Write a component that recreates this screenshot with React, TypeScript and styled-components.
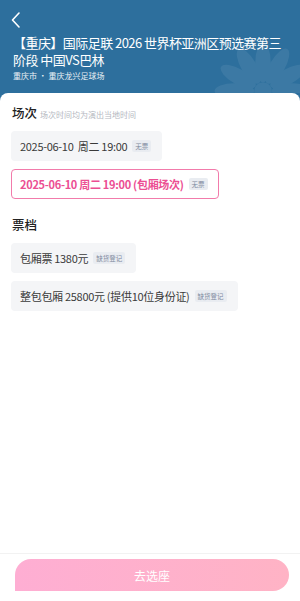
import React, { useState } from 'react';
import styled, { createGlobalStyle } from 'styled-components';

const GlobalStyle = createGlobalStyle`
  html, body {
    margin: 0;
    padding: 0;
    background: #ffffff;
    font-family: "Noto Sans CJK SC", "Noto Sans", sans-serif;
  }
  * { box-sizing: border-box; }
`;

interface Option {
    label: string;
    tag: string;
}

const sessions: Option[] = [
    { label: '2025-06-10  周二 19:00', tag: '无票' },
    { label: '2025-06-10 周二 19:00 (包厢场次)', tag: '无票' },
];

const tickets: Option[] = [
    { label: '包厢票 1380元', tag: '缺货登记' },
    { label: '整包包厢 25800元 (提供10位身份证)', tag: '缺货登记' },
];

const Page = styled.div`
  width: 300px;
  height: 601px;
  display: flex;
  flex-direction: column;
  background: #2d6f9d;
  overflow: hidden;
`;

const Header = styled.div`
  position: relative;
  height: 93px;
  flex-shrink: 0;
  padding: 11px 13px 0 13px;
  color: #fff;
  overflow: hidden;
`;

const BackButton = styled.button`
  display: block;
  width: 12px;
  height: 18px;
  padding: 0;
  margin: 0 0 6px -3px;
  border: none;
  background: none;
  cursor: pointer;
`;

const Title = styled.h1`
  position: relative;
  z-index: 1;
  margin: 0;
  font-size: 13px;
  line-height: 16.5px;
  font-weight: 400;
  letter-spacing: -0.55px;
`;

const Location = styled.div`
  position: relative;
  z-index: 1;
  margin-top: 2px;
  font-size: 8px;
  line-height: 12px;
  opacity: 0.9;
`;

const Flower = styled.svg`
  position: absolute;
  right: -18px;
  top: 36px;
  width: 110px;
  height: 110px;
  opacity: 0.07;
`;

const Sheet = styled.div`
  flex: 1;
  display: flex;
  flex-direction: column;
  background: #fff;
  border-radius: 8px 8px 0 0;
`;

const Content = styled.div`
  flex: 1;
  padding: 10px 11px 0 11px;
`;

const SectionHead = styled.div`
  display: flex;
  align-items: baseline;
  gap: 3px;
  height: 20px;
  margin-bottom: 8px;
  margin-left: 1px;
`;

const SectionTitle = styled.span`
  font-size: 12.5px;
  font-weight: 500;
  color: #222;
`;

const SectionHint = styled.span`
  font-size: 8px;
  color: #b4b8bf;
`;

const OptionList = styled.div`
  display: flex;
  flex-direction: column;
  align-items: flex-start;
  gap: 8px;
  margin-bottom: 16px;
`;

const OptionCard = styled.div<{ $active?: boolean }>`
  display: flex;
  align-items: center;
  gap: 5px;
  height: 30px;
  padding: 0 10px 0 8px;
  border-radius: 4px;
  background: ${p => (p.$active ? '#fff' : '#f4f5f7')};
  border: 1px solid ${p => (p.$active ? '#f27bab' : 'transparent')};
  cursor: pointer;
`;

const OptionLabel = styled.span<{ $active?: boolean }>`
  font-size: 11px;
  letter-spacing: -0.3px;
  white-space: pre;
  color: ${p => (p.$active ? '#ec4f93' : '#3a3a3a')};
  font-weight: ${p => (p.$active ? 600 : 400)};
`;

const Tag = styled.span`
  display: inline-flex;
  align-items: center;
  height: 12px;
  padding: 0 3px;
  border-radius: 2px;
  background: #e9ecf1;
  color: #7f8aa0;
  font-size: 6.5px;
`;

const Footer = styled.div`
  height: 48px;
  flex-shrink: 0;
  border-top: 1px solid #f2f2f2;
  padding: 5px 11px 0 15px;
`;

const SubmitButton = styled.button`
  width: 274px;
  height: 32px;
  border: none;
  border-radius: 16px 16px 16px 0;
  background: linear-gradient(90deg, #feaed3 0%, #ffb3c5 100%);
  color: #fff;
  font-family: inherit;
  font-size: 12px;
  cursor: pointer;
`;

const petals = Array.from({ length: 12 }, (_, i) => i * 30);

export default function App() {
    const [session, setSession] = useState(1);
    const [ticket, setTicket] = useState(-1);

    return (
        <Page>
            <GlobalStyle />
            <Header>
                <BackButton aria-label="返回">
                    <svg width="12" height="18" viewBox="0 0 12 18" fill="none">
                        <path d="M9 2 L2.5 9 L9 16" stroke="#fff" strokeWidth="1.6" strokeLinecap="round" strokeLinejoin="round" />
                    </svg>
                </BackButton>
                <Title>【重庆】国际足联 2026 世界杯亚洲区预选赛第三阶段 中国VS巴林</Title>
                <Location>重庆市 · 重庆龙兴足球场</Location>
                <Flower viewBox="0 0 100 100">
                    {petals.map(a => (
                        <ellipse key={a} cx="50" cy="24" rx="7" ry="18" fill="#fff" transform={`rotate(${a} 50 50)`} />
                    ))}
                    <circle cx="50" cy="50" r="8" fill="#fff" />
                </Flower>
            </Header>
            <Sheet>
                <Content>
                    <SectionHead>
                        <SectionTitle>场次</SectionTitle>
                        <SectionHint>场次时间均为演出当地时间</SectionHint>
                    </SectionHead>
                    <OptionList>
                        {sessions.map((s, i) => (
                            <OptionCard key={s.label} $active={session === i} onClick={() => setSession(i)}>
                                <OptionLabel $active={session === i}>{s.label}</OptionLabel>
                                <Tag>{s.tag}</Tag>
                            </OptionCard>
                        ))}
                    </OptionList>
                    <SectionHead>
                        <SectionTitle>票档</SectionTitle>
                    </SectionHead>
                    <OptionList>
                        {tickets.map((t, i) => (
                            <OptionCard key={t.label} $active={ticket === i} onClick={() => setTicket(i)}>
                                <OptionLabel $active={ticket === i}>{t.label}</OptionLabel>
                                <Tag>{t.tag}</Tag>
                            </OptionCard>
                        ))}
                    </OptionList>
                </Content>
                <Footer>
                    <SubmitButton>去选座</SubmitButton>
                </Footer>
            </Sheet>
        </Page>
    );
}
